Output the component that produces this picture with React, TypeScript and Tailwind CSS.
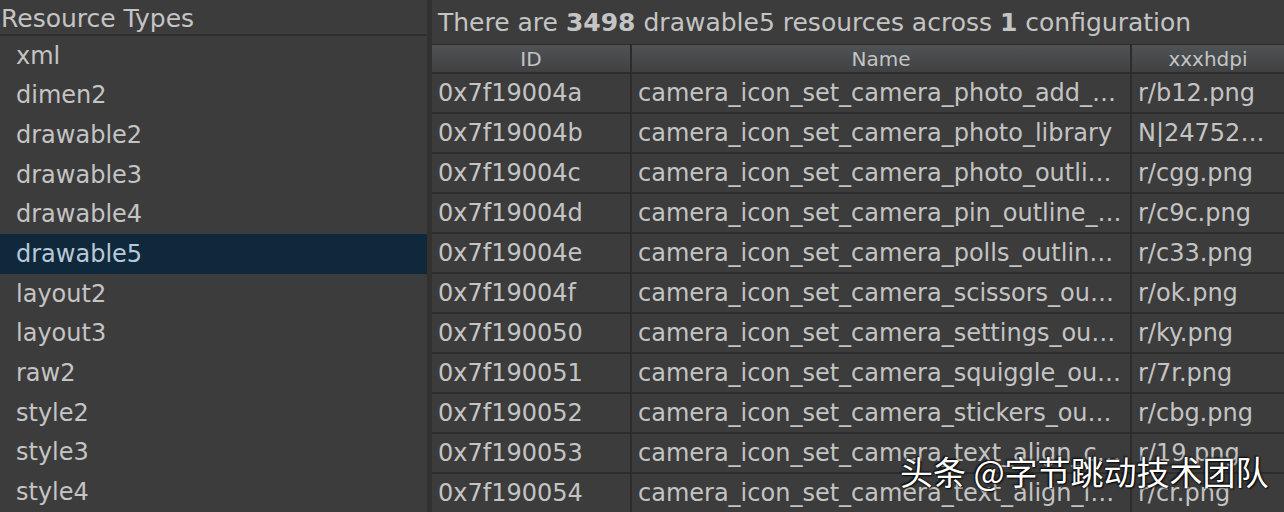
const types = [
  "xml",
  "dimen2",
  "drawable2",
  "drawable3",
  "drawable4",
  "drawable5",
  "layout2",
  "layout3",
  "raw2",
  "style2",
  "style3",
  "style4",
];

const rows = [
  ["0x7f19004a", "camera_icon_set_camera_photo_add_…", "r/b12.png"],
  ["0x7f19004b", "camera_icon_set_camera_photo_library", "N|24752…"],
  ["0x7f19004c", "camera_icon_set_camera_photo_outli…", "r/cgg.png"],
  ["0x7f19004d", "camera_icon_set_camera_pin_outline_…", "r/c9c.png"],
  ["0x7f19004e", "camera_icon_set_camera_polls_outlin…", "r/c33.png"],
  ["0x7f19004f", "camera_icon_set_camera_scissors_ou…", "r/ok.png"],
  ["0x7f190050", "camera_icon_set_camera_settings_ou…", "r/ky.png"],
  ["0x7f190051", "camera_icon_set_camera_squiggle_ou…", "r/7r.png"],
  ["0x7f190052", "camera_icon_set_camera_stickers_ou…", "r/cbg.png"],
  ["0x7f190053", "camera_icon_set_camera_text_align_c…", "r/19.png"],
  ["0x7f190054", "camera_icon_set_camera_text_align_l…", "r/cr.png"],
];

const App = () => {
  return (
    <div
      className="relative flex h-[512px] w-[1284px] overflow-hidden bg-[#3c3c3c] text-[24px] text-[#c4c4c4]"
      style={{ fontFamily: '"DejaVu Sans", Verdana, sans-serif' }}
    >
      {/* resource type list */}
      <div className="flex w-[427px] shrink-0 flex-col">
        <div className="flex h-[36px] items-center border-b-2 border-[#2f2f2f] pl-[1px] pt-[3px] text-[25px] leading-none">
          Resource Types
        </div>
        {types.map((t) => (
          <div
            key={t}
            className={
              t === "drawable5"
                ? "flex h-[40px] items-center bg-[#10283c] pl-[16px] text-[#b9c8d8]"
                : "flex h-[40px] items-center pl-[16px]"
            }
          >
            {t}
          </div>
        ))}
      </div>

      <div className="w-[5px] shrink-0 bg-[#313131]" />

      {/* resource table */}
      <div className="flex min-w-0 flex-1 flex-col">
        <div className="flex h-[44px] items-center pl-[6px] pt-[2px] text-[25px]">
          There are&nbsp;<b>3498</b>&nbsp;drawable5 resources across&nbsp;<b>1</b>&nbsp;configuration
        </div>
        <div className="grid grid-cols-[198px_498px_1fr] gap-[2px] bg-[#2c2c2c] pt-[1px]">
          <div className="flex h-[27px] items-center justify-center bg-gradient-to-b from-[#505355] to-[#3f4143] text-[20px]">
            ID
          </div>
          <div className="flex h-[27px] items-center justify-center bg-gradient-to-b from-[#505355] to-[#3f4143] text-[20px]">
            Name
          </div>
          <div className="flex h-[27px] items-center justify-center bg-gradient-to-b from-[#505355] to-[#3f4143] text-[20px]">
            xxxhdpi
          </div>
          {rows.map((r) =>
            r.map((c, i) => (
              <div
                key={r[0] + i}
                className="flex h-[38px] items-center overflow-hidden whitespace-nowrap bg-[#3c3c3c] pl-[6px]"
              >
                {c}
              </div>
            ))
          )}
        </div>
      </div>

      {/* watermark */}
      <div
        className="absolute left-[900px] top-[455px] text-[33px] leading-none text-white"
        style={{
          fontFamily: '"Noto Sans CJK SC", sans-serif',
          textShadow: "1px 1px 2px #000, -1px -1px 2px #000",
        }}
      >
        头条 @字节跳动技术团队
      </div>
    </div>
  );
};

export default App;
